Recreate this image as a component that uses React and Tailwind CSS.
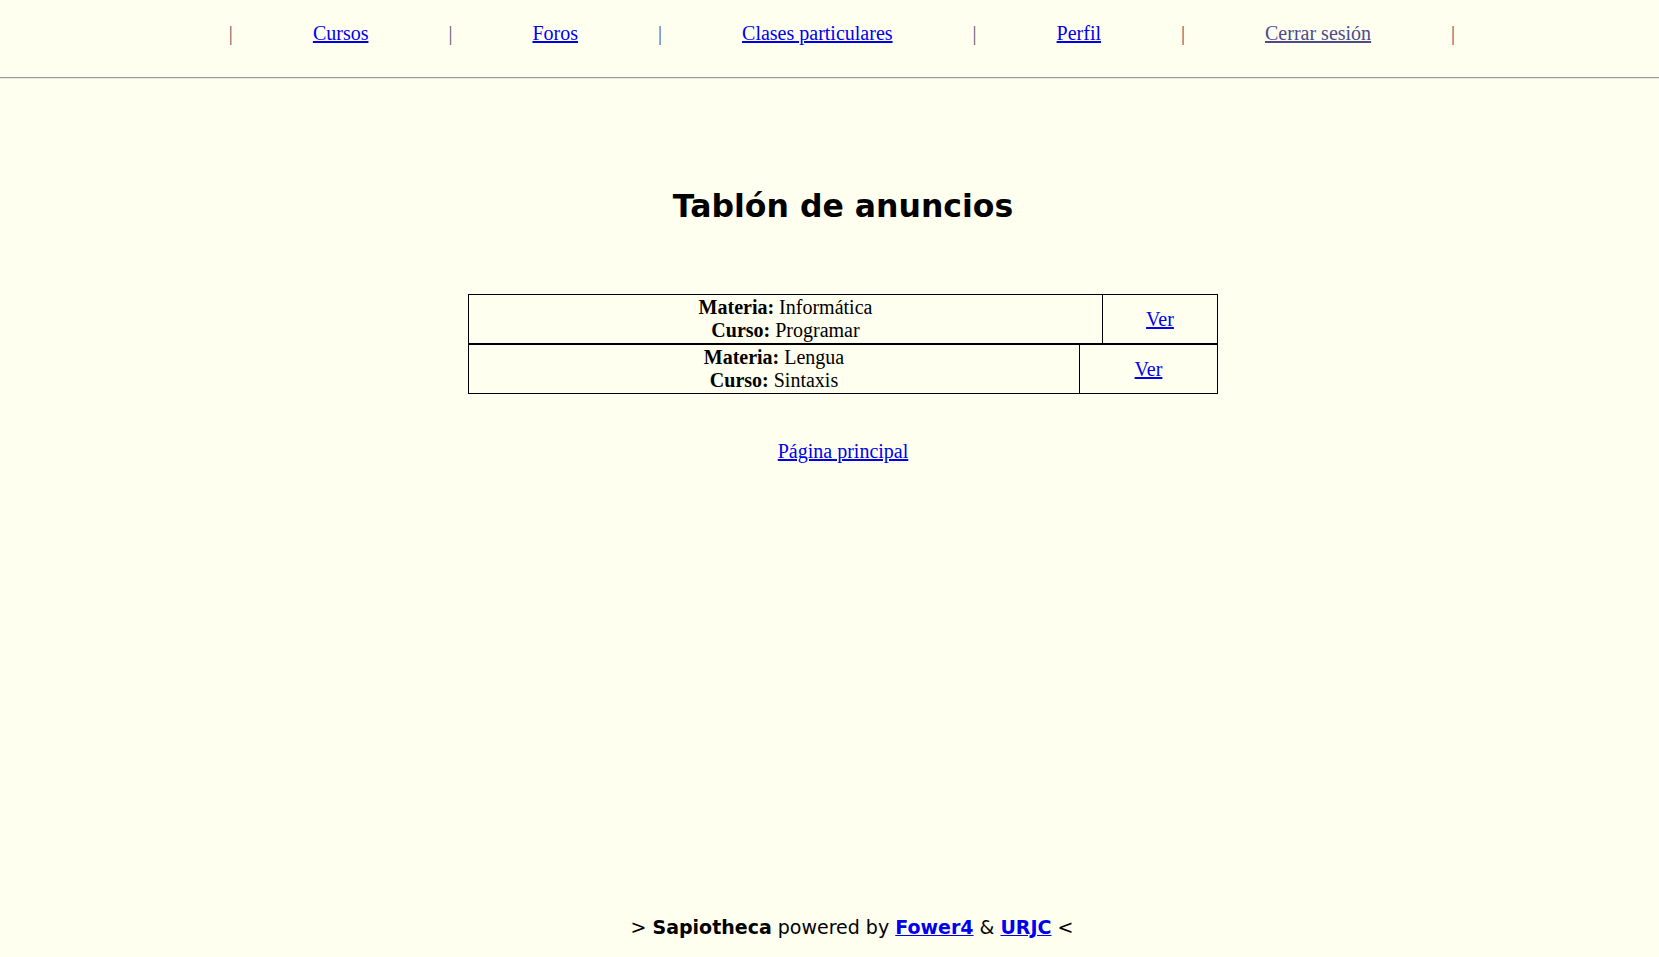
import React from 'react'

const navLinks = [
  { label: 'Cursos' },
  { label: 'Foros' },
  { label: 'Clases particulares' },
  { label: 'Perfil' },
  { label: 'Cerrar sesión', muted: true },
]

const anuncios = [
  { materia: 'Informática', curso: 'Programar', firstCol: 'w-[634px]' },
  { materia: 'Lengua', curso: 'Sintaxis', firstCol: 'w-[611px]' },
]

function Pipe() {
  return <span className="text-[#5a5a6a]">|</span>
}

export default function App() {
  return (
    <div className="min-h-screen flex flex-col bg-[#fffff0] text-black font-['Liberation_Serif',serif] text-[20px] leading-[23px]">
      {/* Header nav */}
      <header className="h-[78px] border-b border-[#9a9a94] shadow-[0_1px_0_#ecece4]">
        <nav className="pt-[22px] pl-[25px] flex justify-center items-center">
          <Pipe />
          {navLinks.map((link) => (
            <React.Fragment key={link.label}>
              <a
                href="#"
                className={
                  'px-[80px] underline ' +
                  (link.muted ? 'text-[#4b4b8c]' : 'text-[#0000ee]')
                }
              >
                {link.label}
              </a>
              <Pipe />
            </React.Fragment>
          ))}
        </nav>
      </header>

      {/* Main content */}
      <main className="pl-[27px] flex flex-col items-center">
        <h1 className="mt-[109px] font-['DejaVu_Sans',sans-serif] font-bold text-[31.5px] leading-[38px]">
          Tablón de anuncios
        </h1>

        <div className="mt-[69px] w-[750px]">
          {anuncios.map((a) => (
            <table key={a.materia} className="w-full border-collapse border border-black">
              <tbody>
                <tr>
                  <td className={a.firstCol + ' border border-black text-center px-[2px] py-[1px]'}>
                    <b>Materia:</b> {a.materia}
                    <br />
                    <b>Curso:</b> {a.curso}
                  </td>
                  <td className="border border-black text-center px-[2px] py-[1px]">
                    <a href="#" className="text-[#0000ee] underline">Ver</a>
                  </td>
                </tr>
              </tbody>
            </table>
          ))}
        </div>

        <a href="#" className="mt-[46px] text-[#0000ee] underline">
          Página principal
        </a>
      </main>

      {/* Footer */}
      <footer className="mt-auto pb-[19px] pl-[45px] text-center font-['DejaVu_Sans',sans-serif] text-[19px] leading-[22px]">
        &gt; <b>Sapiotheca</b> powered by{' '}
        <a href="#" className="font-bold text-[#0000ee] underline">Fower4</a> &amp;{' '}
        <a href="#" className="font-bold text-[#0000ee] underline">URJC</a> &lt;
      </footer>
    </div>
  )
}
